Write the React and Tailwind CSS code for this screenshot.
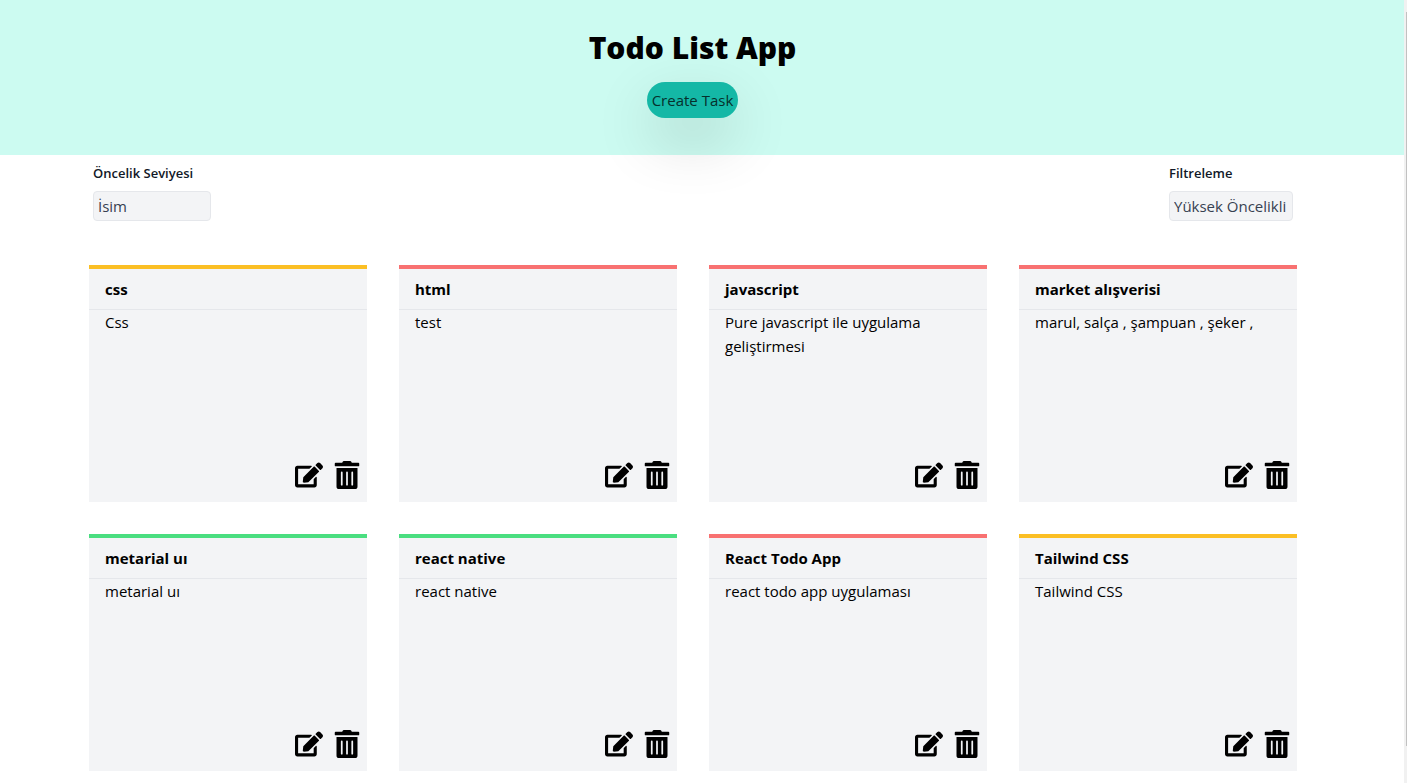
import { FaEdit, FaTrashAlt } from "react-icons/fa";

const PRIORITY = {
  high: "border-[#f87171]",
  medium: "border-[#fbbf24]",
  low: "border-[#4ade80]",
};

const TASKS = [
  { title: "css", text: "Css", priority: "medium" },
  { title: "html", text: "test", priority: "high" },
  { title: "javascript", text: "Pure javascript ile uygulama geliştirmesi", priority: "high" },
  { title: "market alışverisi", text: "marul, salça , şampuan , şeker ,", priority: "high" },
  { title: "metarial uı", text: "metarial uı", priority: "low" },
  { title: "react native", text: "react native", priority: "low" },
  { title: "React Todo App", text: "react todo app uygulaması", priority: "high" },
  { title: "Tailwind CSS", text: "Tailwind CSS", priority: "medium" },
];

function Filter({ id, label, width, options }) {
  return (
    <div className="flex flex-col items-start">
      <label htmlFor={id} className="text-[13px] leading-5 font-semibold text-[#111827]">
        {label}
      </label>
      <select
        id={id}
        className={`mt-2 h-[30px] appearance-none rounded border border-[#e5e7eb] bg-[#f3f4f6] px-1 text-[15px] text-[#374151] ${width}`}
      >
        {options.map((o) => (
          <option key={o}>{o}</option>
        ))}
      </select>
    </div>
  );
}

function TaskCard({ task }) {
  return (
    <article className={`flex min-h-[237px] flex-col border-t-4 bg-[#f3f4f6] ${PRIORITY[task.priority]}`}>
      <h2 className="border-b border-[#e5e7eb] px-4 py-2 text-[15px] leading-6 font-bold">{task.title}</h2>
      <p className="px-4 text-[15px] leading-6">{task.text}</p>
      <div className="mt-auto mb-[13px] flex items-center justify-end gap-2.5 pr-1.5">
        <button type="button" aria-label="Edit">
          <FaEdit size={28} />
        </button>
        <button type="button" aria-label="Delete">
          <FaTrashAlt size={28} />
        </button>
      </div>
    </article>
  );
}

export default function App() {
  return (
    <div className="flex min-h-screen bg-white font-['Open_Sans','Noto_Sans',sans-serif] text-black">
      <div className="min-w-0 flex-1">
        <header className="flex h-[155px] flex-col items-center bg-[#ccfbf1] pt-7 pr-[19px]">
          <h1 className="text-[30px] leading-10 font-extrabold">Todo List App</h1>
          <button
            type="button"
            className="mt-3.5 h-9 rounded-full bg-[#14b8a6] px-[5px] text-[15px] text-[#06302c] shadow-[0_22px_60px_-2px_rgba(0,0,0,0.19)]"
          >
            Create Task
          </button>
        </header>
        <main className="pr-[18px]">
          <div className="mx-auto max-w-[1208px]">
            <div className="flex justify-between px-1 pt-2">
              <Filter id="sort" label="Öncelik Seviyesi" width="w-[118px]" options={["İsim", "Öncelik"]} />
              <Filter
                id="filter"
                label="Filtreleme"
                width="w-[124px]"
                options={["Yüksek Öncelikli", "Düşük Öncelikli"]}
              />
            </div>
            <section className="mt-11 grid grid-cols-4 gap-8">
              {TASKS.map((t) => (
                <TaskCard key={t.title} task={t} />
              ))}
            </section>
          </div>
        </main>
      </div>
      <div aria-hidden="true" className="flex w-[3px] justify-end bg-[#f1f1f1] pt-3 pb-[37px]">
        <div className="w-px bg-[#c1c1c1]" />
      </div>
    </div>
  );
}
